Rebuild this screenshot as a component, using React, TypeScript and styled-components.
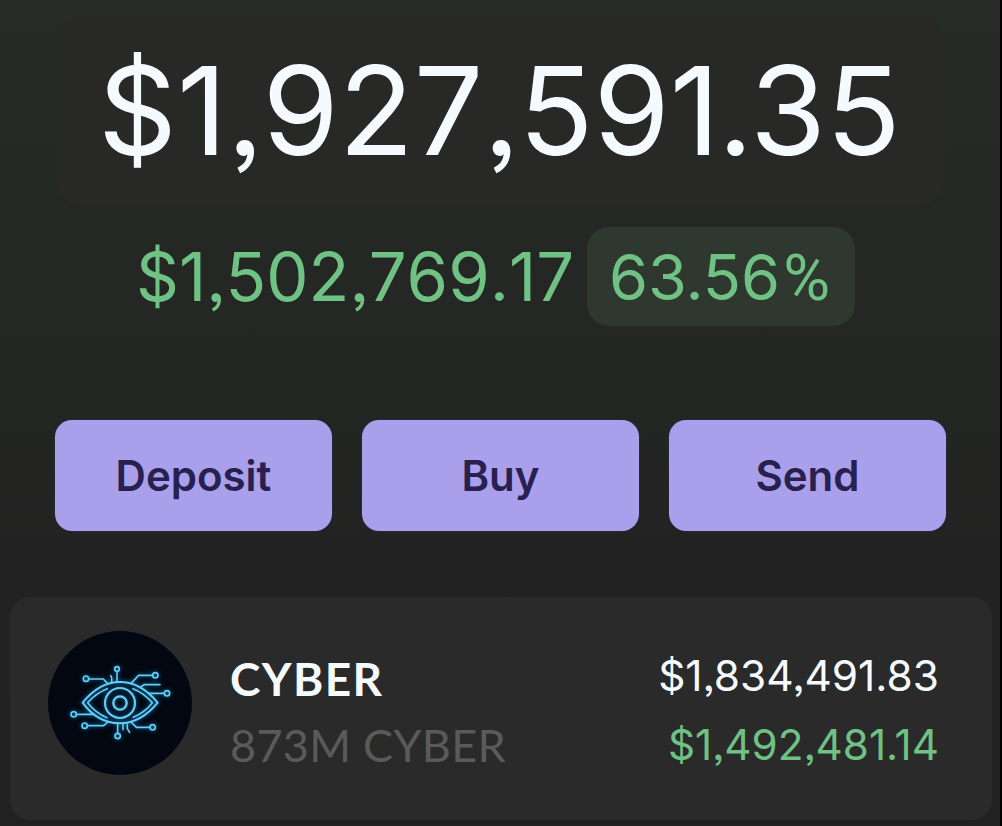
import styled, { createGlobalStyle } from 'styled-components';

const GlobalStyle = createGlobalStyle`
  * {
    box-sizing: border-box;
  }
  body {
    margin: 0;
    background-color: #000;
    font-family: Inter, 'Liberation Sans', sans-serif;
  }
`;

const Screen = styled.main`
  display: flex;
  flex-direction: column;
  width: 1000px;
  height: 826px;
  background: linear-gradient(#272c29 0, #242825 200px, #242623 400px, #222 560px, #212121 100%);
  overflow: hidden;
`;

type AmountProps = {
  $size: number;
  $color?: string;
  $kerning?: string;
};

const Amount = styled.span<AmountProps>`
  font-size: ${({ $size }) => $size}px;
  color: ${({ $color = '#f5faff' }) => $color};
  font-kerning: ${({ $kerning = 'normal' }) => $kerning};
  font-feature-settings: 'ss03';
  line-height: 1;
  white-space: nowrap;
`;

const Cents = styled.span`
  margin-left: -2px;
  font-kerning: normal;
`;

const Percent = styled.span`
  margin-left: 3px;
  font-family: Roboto, sans-serif;
  font-size: 64px;
  line-height: 1;
`;

const Balance = styled.section`
  display: flex;
  height: 190px;
  margin: 16px 55px 0;
  padding: 33px 0 0 43px;
  border-radius: 28px;
  background-color: #282927;
`;

const Change = styled.section`
  display: flex;
  align-items: flex-start;
  height: 99px;
  margin: 21px 0 0 136px;
`;

const ChangeTotal = styled.div`
  display: flex;
  width: 451px;
  padding-top: 16px;
`;

const ChangeBadge = styled.div`
  display: flex;
  width: 268px;
  height: 99px;
  padding: 19px 0 0 22px;
  border-radius: 22px;
  background-color: #2e382f;
`;

const Actions = styled.nav`
  display: flex;
  gap: 30px;
  margin: 94px 54px 0 55px;
`;

const ActionButton = styled.button`
  flex: 1;
  height: 111px;
  padding: 0 0 1px;
  border: 0;
  border-radius: 17px;
  background-color: #aa9fea;
  box-shadow: 0 0 2px #38315f;
  color: #28204f;
  font-family: inherit;
  font-size: 42px;
  font-weight: 600;
  cursor: pointer;
`;

const TokenRow = styled.section`
  display: flex;
  height: 223px;
  margin: 66px 8px 0 10px;
  padding: 34px 53px 0 38px;
  border-radius: 20px;
  background-color: #2a2a2a;
`;

const TokenInfo = styled.div`
  display: flex;
  flex: 1;
  flex-direction: column;
  padding: 21px 0 0 38px;
  font-family: Lato, 'Liberation Sans', sans-serif;
`;

const TokenName = styled.span`
  color: #f5faff;
  font-size: 46px;
  font-weight: 700;
  letter-spacing: 1.4px;
  line-height: 54px;
`;

const TokenAmount = styled.span`
  margin-top: 12px;
  color: #5a5a5a;
  font-size: 45px;
  letter-spacing: 0.3px;
  line-height: 54px;
`;

const TokenValue = styled.div`
  display: flex;
  flex-direction: column;
  align-items: flex-end;
  gap: 27px;
  padding-top: 24px;
`;

const nodes = [
  [138, 164, 8],
  [231, 135, 7],
  [346, 154, 8],
  [381, 208, 8],
  [101, 271, 8],
  [134, 305, 8],
  [233, 336, 8],
  [338, 310, 8],
];

const EyeLogo = () => (
  <svg width="144" height="144" viewBox="24 21 432 432" fill="none">
    <defs>
      <filter id="glow" x="-20%" y="-20%" width="140%" height="140%">
        <feGaussianBlur stdDeviation="7" />
      </filter>
      <g id="eye" strokeLinecap="round" strokeLinejoin="round">
        <path
          strokeWidth="6"
          d="M128 236C160 196 196 174 240 174S322 198 353 236C322 274 284 298 240 298S158 278 128 236Z"
        />
        <path
          strokeWidth="5"
          d="M202 194C178 203 158 219 143 236C159 257 178 271 201 281M279 194C302 203 322 219 337 236C321 257 302 270 280 280"
        />
        <circle cx="240" cy="237" r="45" strokeWidth="6.5" />
        <circle cx="240" cy="237" r="20" strokeWidth="7" />
        <path
          strokeWidth="4.8"
          d="M147 165H190L203 179M231 143V174M215 173V161L212 155M273 178L296 154H337M303 189L312 182H360M328 208H372M110 271H161M143 305H191L204 294M233 298V328M249 300V317M262 300V314L269 325M275 296L289 310H329"
        />
        {nodes.map(([cx, cy, r]) => (
          <circle key={`${cx}-${cy}`} cx={cx} cy={cy} r={r} strokeWidth="5" />
        ))}
      </g>
    </defs>
    <circle cx="240" cy="237" r="216" fill="#020711" />
    <use href="#eye" stroke="#087bbb" filter="url(#glow)" />
    <use href="#eye" stroke="#6accf0" />
  </svg>
);

const actions = ['Deposit', 'Buy', 'Send'];

const App = () => (
  <>
    <GlobalStyle />
    <Screen>
      <Balance>
        <Amount $size={123} $kerning="none">
          $1,927,591<Cents>.35</Cents>
        </Amount>
      </Balance>
      <Change>
        <ChangeTotal>
          <Amount $size={67} $color="#70c184" $kerning="none">
            $1,502,769.17
          </Amount>
        </ChangeTotal>
        <ChangeBadge>
          <Amount $size={63} $color="#70c184">
            63.56<Percent>%</Percent>
          </Amount>
        </ChangeBadge>
      </Change>
      <Actions>
        {actions.map((action) => (
          <ActionButton key={action}>{action}</ActionButton>
        ))}
      </Actions>
      <TokenRow>
        <EyeLogo />
        <TokenInfo>
          <TokenName>CYBER</TokenName>
          <TokenAmount>873M CYBER</TokenAmount>
        </TokenInfo>
        <TokenValue>
          <Amount $size={42.4}>$1,834,491.83</Amount>
          <Amount $size={42.2} $color="#70c184">
            $1,492,481.14
          </Amount>
        </TokenValue>
      </TokenRow>
    </Screen>
  </>
);

export default App;
